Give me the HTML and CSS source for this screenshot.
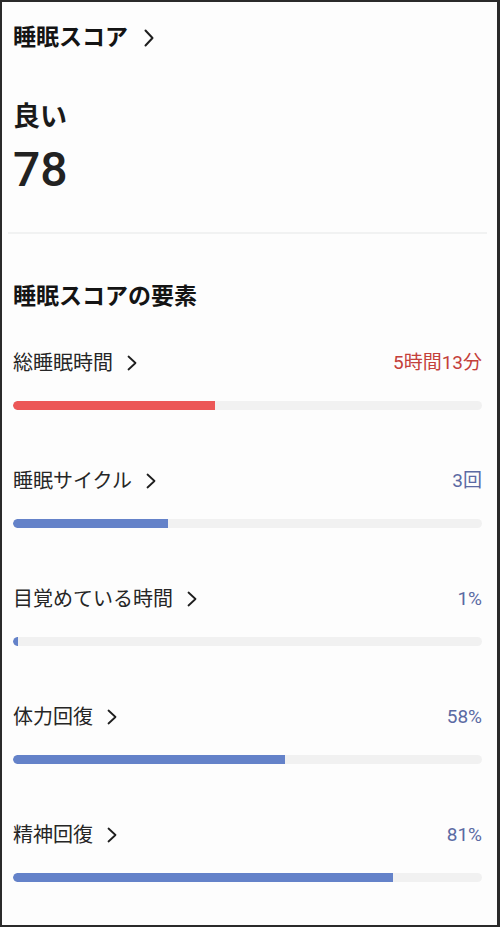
FILE: index.html
```html
<!DOCTYPE html>
<html>
  <head>
    <title>睡眠スコア</title>
    <link rel="stylesheet" href="styles.css">
  </head>
  <body>
    <div class="screen">
      <div class="summary">
        <h1 class="title">
          睡眠スコア
          <svg class="chevron chevron-lg" viewBox="0 0 10 18"><polyline points="1.5,1.5 8.5,9 1.5,16.5" /></svg>
        </h1>
        <div class="grade">良い</div>
        <div class="score">78</div>
      </div>

      <div class="divider"></div>

      <h2 class="section-title">睡眠スコアの要素</h2>

      <div class="factor">
        <div class="factor-head">
          <span class="factor-name">総睡眠時間
            <svg class="chevron" viewBox="0 0 10 16"><polyline points="1.5,1.5 8.5,8 1.5,14.5" /></svg>
          </span>
          <span class="factor-value red">5時間13分</span>
        </div>
        <div class="bar"><div class="fill red-fill" style="width: 43%"></div></div>
      </div>

      <div class="factor">
        <div class="factor-head">
          <span class="factor-name">睡眠サイクル
            <svg class="chevron" viewBox="0 0 10 16"><polyline points="1.5,1.5 8.5,8 1.5,14.5" /></svg>
          </span>
          <span class="factor-value">3回</span>
        </div>
        <div class="bar"><div class="fill" style="width: 33%"></div></div>
      </div>

      <div class="factor">
        <div class="factor-head">
          <span class="factor-name">目覚めている時間
            <svg class="chevron" viewBox="0 0 10 16"><polyline points="1.5,1.5 8.5,8 1.5,14.5" /></svg>
          </span>
          <span class="factor-value">1%</span>
        </div>
        <div class="bar"><div class="fill" style="width: 1%"></div></div>
      </div>

      <div class="factor">
        <div class="factor-head">
          <span class="factor-name">体力回復
            <svg class="chevron" viewBox="0 0 10 16"><polyline points="1.5,1.5 8.5,8 1.5,14.5" /></svg>
          </span>
          <span class="factor-value">58%</span>
        </div>
        <div class="bar"><div class="fill" style="width: 58%"></div></div>
      </div>

      <div class="factor">
        <div class="factor-head">
          <span class="factor-name">精神回復
            <svg class="chevron" viewBox="0 0 10 16"><polyline points="1.5,1.5 8.5,8 1.5,14.5" /></svg>
          </span>
          <span class="factor-value">81%</span>
        </div>
        <div class="bar"><div class="fill" style="width: 81%"></div></div>
      </div>
    </div>
  </body>
</html>
```

FILE: styles.css
```css
* {
  box-sizing: border-box;
  margin: 0;
  padding: 0;
}

body {
  font-family: Roboto, "Noto Sans CJK JP", sans-serif;
  background: #fdfdfd;
  color: #1e1e1e;
}

.screen {
  width: 500px;
  height: 927px;
  border: 2px solid #2a2a2a;
  border-right-width: 3px;
  background: #fdfdfd;
  padding: 0 15px 0 11px;
  overflow: hidden;
}

.summary {
  padding-top: 21px;
}

.title {
  display: flex;
  align-items: center;
  font-size: 23px;
  font-weight: 700;
  line-height: 30px;
  color: #141414;
}

.chevron {
  width: 10px;
  height: 16px;
  margin-left: 14px;
  fill: none;
  stroke: #1e1e1e;
  stroke-width: 1.8;
  stroke-linecap: round;
  stroke-linejoin: round;
}

.chevron-lg {
  height: 18px;
  margin-left: 16px;
  stroke-width: 2;
}

.grade {
  margin-top: 47px;
  font-size: 27px;
  font-weight: 700;
  line-height: 34px;
  color: #1a1a1a;
}

.score {
  margin-top: 8px;
  font-size: 48px;
  font-weight: 500;
  line-height: 56px;
  color: #222222;
}

.divider {
  height: 2px;
  margin: 34px -5px 0 -5px;
  background: #f1f2f2;
}

.section-title {
  margin-top: 48px;
  font-size: 23px;
  font-weight: 700;
  line-height: 30px;
  color: #141414;
}

.factor {
  margin-top: 37px;
}

.factor + .factor {
  margin-top: 57px;
}

.factor-head {
  display: flex;
  justify-content: space-between;
  align-items: center;
  height: 28px;
}

.factor-name {
  display: flex;
  align-items: center;
  font-size: 20px;
  line-height: 28px;
  color: #262626;
}

.factor-value {
  font-size: 19px;
  line-height: 28px;
  color: #5b6aa3;
}

.factor-value.red {
  color: #c4403a;
}

.bar {
  margin-top: 24px;
  height: 9px;
  border-radius: 5px;
  background: #f1f1f1;
  overflow: hidden;
}

.fill {
  height: 100%;
  border-radius: 5px 0 0 5px;
  background: #6482c9;
}

.red-fill {
  background: #ec5757;
}
```
